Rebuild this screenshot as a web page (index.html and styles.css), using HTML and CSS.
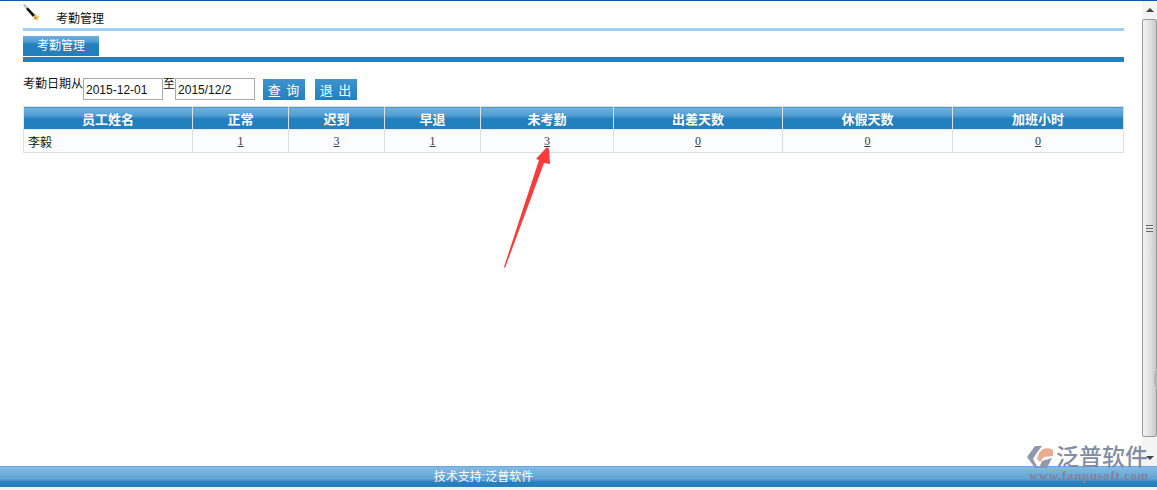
FILE: index.html
```html
<!DOCTYPE html>
<html lang="zh-CN">
<head>
  <meta charset="UTF-8">
  <title>考勤管理</title>
  <link rel="stylesheet" href="styles.css">
</head>
<body>
  <div class="pagina">
    <div class="contenido">
      <div class="cabecera">
        <svg class="icono" width="20" height="20" viewBox="1 0 20 20">
          <path d="M1 1 L3 0 L6 4 L4 5 Z" fill="#b8bcc4"/>
          <path d="M4 5 L6 3.5 L13 11 L11 13 Z" fill="#111"/>
          <path d="M14 9 L15 12 L18 12.5 L15.5 14 L16 17 L13.5 15 L11 17 L12 14 L13 11 Z" fill="#f0c050"/>
          <path d="M12 13 L14 12.5 L14.5 15 L13 15 Z" fill="#c87830"/>
        </svg>
        <span class="titulo">考勤管理</span>
      </div>
      <div class="linea-clara"></div>
      <div class="pestana">考勤管理</div>
      <div class="linea-azul"></div>

      <div class="formulario">
        <span class="etiqueta">考勤日期从</span>
        <input class="fecha" type="text" value="2015-12-01">
        <span class="etiqueta">至</span>
        <input class="fecha" type="text" value="2015/12/2">
        <button class="boton primero">查 询</button>
        <button class="boton">退 出</button>
      </div>

      <table class="tabla">
        <colgroup>
          <col class="c-nombre">
          <col class="c-corta">
          <col class="c-corta">
          <col class="c-corta">
          <col class="c-media">
          <col class="c-larga">
          <col class="c-larga2">
          <col class="c-ultima">
        </colgroup>
        <thead>
          <tr>
            <th>员工姓名</th>
            <th>正常</th>
            <th>迟到</th>
            <th>早退</th>
            <th>未考勤</th>
            <th>出差天数</th>
            <th>休假天数</th>
            <th>加班小时</th>
          </tr>
        </thead>
        <tbody>
          <tr>
            <td class="nombre">李毅</td>
            <td><a href="#">1</a></td>
            <td><a href="#">3</a></td>
            <td><a href="#">1</a></td>
            <td><a href="#">3</a></td>
            <td><a href="#">0</a></td>
            <td><a href="#">0</a></td>
            <td><a href="#">0</a></td>
          </tr>
        </tbody>
      </table>
    </div>

    <div class="scroll">
      <div class="flecha"><span class="tri-arriba"></span></div>
      <div class="barra"><span class="agarre"></span></div>
      <div class="flecha abajo"><span class="tri-abajo"></span></div>
    </div>
  </div>

  <div class="pie">技术支持:泛普软件</div>
  <div class="resto"></div>

  <div class="muesca"></div>

  <!-- flecha roja encima de la tabla -->
  <svg class="flecha-roja" width="60" height="125" viewBox="0 0 60 125">
    <path d="M44 1 L46 3 L47 18 L41 17 L2 122 L1 121 L36 14 L33 13 Z" fill="#fb3a3a"/>
  </svg>

  <!-- marca de agua -->
  <div class="marca">
    <svg class="logo" width="28" height="24" viewBox="0 0 28 24">
      <path d="M8 1 L15 1 L9 9 L6 14 L11 23 L8 23 L0 12 Z" fill="#8a94a8"/>
      <path d="M12 8 C15 3 21 2 26 5 L26 11 L17 12 L13 17 L10 14 Z" fill="#e8a888"/>
      <path d="M15 16 L25 13 L20 23 L12 23 Z" fill="#8a94a8"/>
    </svg>
    <div class="marca-textos">
      <div class="marca-nombre">泛普软件</div>
      <div class="marca-web">www.fanpusoft.com</div>
    </div>
  </div>
</body>
</html>
```

FILE: styles.css
```css
html, body {
  margin: 0;
  padding: 0;
  height: 490px;
  overflow: hidden;
  background: white;
  font-family: "Liberation Sans", "Noto Sans CJK SC", sans-serif;
  font-size: 12px;
  color: #111;
}
body {
  position: relative;
}
.pagina {
  display: flex;
  height: 465px;
  border-top: 1px solid #0a5cb0;
}
.contenido {
  flex: 1;
  padding: 0 18px 0 23px;
}
.cabecera {
  display: flex;
  height: 27px;
  align-items: flex-start;
}
.icono {
  margin-top: 3px;
  width: 20px;
}
.titulo {
  margin: 8px 0 0 13px;
}
.linea-clara {
  height: 3px;
  background: #a1cff1;
}
.pestana {
  width: 76px;
  height: 20px;
  line-height: 20px;
  margin-top: 5px;
  text-align: center;
  color: white;
  background: linear-gradient(#6db0de 0, #4f9bd2 30%, #2280bf 40%, #2280bf 100%);
}
.linea-azul {
  height: 5px;
  margin-top: 1px;
  background: #2280bf;
}
.formulario {
  display: flex;
  align-items: flex-start;
  height: 30px;
  margin-top: 14px;
}
.etiqueta {
  line-height: 16px;
}
.fecha {
  box-sizing: border-box;
  width: 80px;
  height: 22px;
  margin: 2px 0 0 0;
  padding: 2px 1px 0 2px;
  border: 1px solid #a9a9b0;
  font-family: "Liberation Sans", sans-serif;
  font-size: 12px;
  color: #111;
  background: white;
}
.boton {
  width: 42px;
  height: 21px;
  margin: 3px 0 0 10px;
  padding: 0;
  border: none;
  color: white;
  font-family: inherit;
  font-size: 13px;
  letter-spacing: 1px;
  background: linear-gradient(#3f93cd 0, #2280bf 100%);
}
.primero {
  margin-left: 8px;
}
.tabla {
  width: 1100px;
  border-collapse: collapse;
  table-layout: fixed;
}
.tabla th, .tabla td {
  border: 1px solid #dfdfdf;
  text-align: center;
  padding: 0;
}
.tabla th {
  height: 22px;
  color: white;
  font-size: 13px;
  background: linear-gradient(#72b3e0 0, #4c9ad1 40%, #2280bf 50%, #2280bf 100%);
  border-left-color: #e4eef6;
  border-bottom-color: #e4eef6;
}
.tabla td {
  height: 22px;
  background: #fbfcfe;
  font-size: 11px;
}
.tabla td.nombre {
  text-align: left;
  padding-left: 4px;
  font-size: 12px;
}
.tabla a {
  color: #333a55;
  font-family: "Liberation Serif", serif;
  font-size: 12px;
}
.c-nombre { width: 169px; }
.c-corta { width: 96px; }
.c-media { width: 133px; }
.c-larga { width: 169px; }
.c-larga2 { width: 170px; }
.c-ultima { width: 171px; }
.scroll {
  width: 16px;
  display: flex;
  flex-direction: column;
  background: #f3f3f3;
}
.flecha {
  height: 18px;
  display: flex;
  justify-content: center;
  align-items: center;
  background: #f4f4f4;
}
.flecha.abajo {
  height: 29px;
  align-items: flex-end;
  padding-bottom: 6px;
  box-sizing: border-box;
}
.tri-arriba, .tri-abajo {
  width: 0;
  height: 0;
  border-left: 4px solid transparent;
  border-right: 4px solid transparent;
}
.tri-arriba {
  border-bottom: 4px solid #444;
}
.tri-abajo {
  border-top: 4px solid #444;
}
.barra {
  flex: 1;
  display: flex;
  justify-content: center;
  align-items: center;
  box-sizing: border-box;
  border: 1px solid #9a9a9a;
  border-radius: 2px;
  background: linear-gradient(90deg, #f2f2f2, #e6e6e6 40%, #c9c9c9);
}
.agarre {
  width: 7px;
  height: 7px;
  background: repeating-linear-gradient(#666 0 1px, #e4e4e4 1px 3px);
}
.muesca {
  position: absolute;
  left: 1154px;
  top: 368px;
  width: 8px;
  height: 22px;
  border-radius: 50%;
  background: #b4b4b4;
}
.pie {
  height: 20px;
  line-height: 21px;
  text-align: center;
  color: white;
  padding-right: 190px;
  border-top: 1px solid #66a8ec;
  background: linear-gradient(#84bbe2 0, #5fa3d4 60%, #2a7fbc 75%, #2280bf 100%);
}
.resto {
  height: 4px;
  background: #f2f2f2;
}
.flecha-roja {
  position: absolute;
  left: 503px;
  top: 146px;
}
.marca {
  position: absolute;
  left: 1027px;
  top: 445px;
  display: flex;
  gap: 1px;
  opacity: .95;
}
.logo {
  margin-top: 0;
}
.marca-nombre {
  font-size: 23px;
  line-height: 24px;
  color: #7b87a0;
  font-weight: 500;
  letter-spacing: 0;
  white-space: nowrap;
}
.marca-web {
  position: absolute;
  left: 2px;
  top: 24px;
  font-family: "Liberation Serif", serif;
  font-weight: bold;
  font-size: 13px;
  line-height: 14px;
  letter-spacing: .6px;
  color: #86809c;
  white-space: nowrap;
}
```
